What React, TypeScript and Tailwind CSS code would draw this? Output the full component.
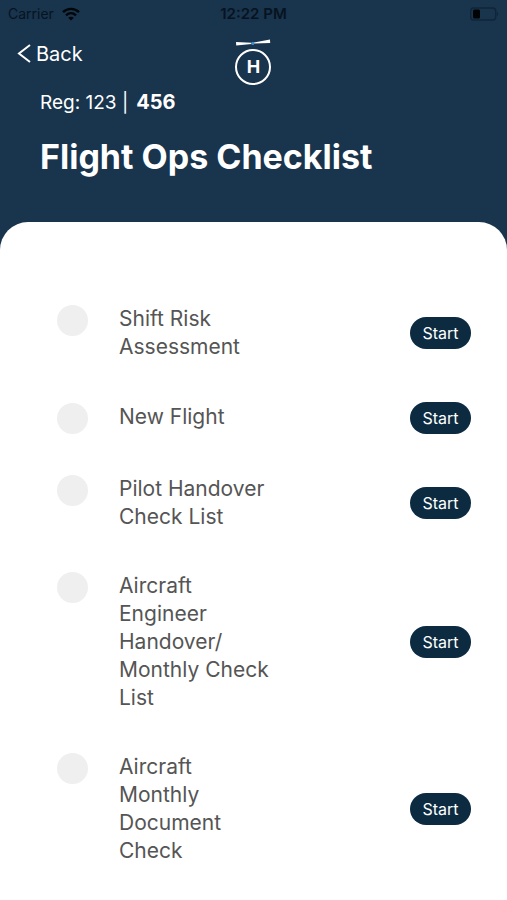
import React from 'react';

const checklists = [
  'Shift Risk Assessment',
  'New Flight',
  'Pilot Handover Check List',
  'Aircraft Engineer Handover/ Monthly Check List',
  'Aircraft Monthly Document Check',
];

const StatusBar: React.FC = () => (
  <div className="grid grid-cols-3 items-center h-7 px-2 text-sm text-[#07131f]">
    <div className="flex items-center gap-2">
      <span>Carrier</span>
      <svg width="18" height="14" viewBox="0 0 18 14" fill="none" stroke="#020609" strokeWidth="2.4" aria-hidden="true">
        <path d="M1 5.2C5.6.7 12.4.7 17 5.2" />
        <path d="M4 8.4c3-2.8 7-2.8 10 0" />
        <path d="M9 13.6 6.2 10.8c1.6-1.5 4-1.5 5.6 0z" fill="#020609" stroke="none" />
      </svg>
    </div>
    <span className="text-center text-[15px] font-semibold">12:22 PM</span>
    <svg className="justify-self-end" width="30" height="14" viewBox="0 0 30 14" aria-hidden="true">
      <rect x="1.7" y="1" width="25" height="12" rx="3" fill="none" stroke="#0f2539" strokeWidth="1.4" />
      <rect x="4" y="2.5" width="7" height="9" rx="1.5" fill="#010305" />
      <path d="M28 5v4c1.5-.5 1.5-3.5 0-4z" fill="#0f2539" />
    </svg>
  </div>
);

const Logo: React.FC = () => (
  <div className="flex flex-col items-center text-white">
    <svg className="overflow-visible" width="36" height="9" viewBox="0 0 36 9" aria-hidden="true">
      <path d="M1 2 16.5 2.8v1.1L1.2 5.4z" fill="#fff" />
      <path d="M19 2.4 35-.4l.2 3.4L19 3.6z" fill="#fff" />
      <circle cx="17.8" cy="3.4" r="1.6" fill="#3f8fd0" />
    </svg>
    <div className="flex items-center justify-center size-9 rounded-full border-2 border-white text-lg font-bold">H</div>
  </div>
);

const App: React.FC = () => {
  return (
    <div className="min-h-screen flex flex-col bg-[#19344d] font-[Inter,sans-serif]">
      <header className="pb-[45px]">
        <StatusBar />
        <div className="grid grid-cols-3 items-start px-4 pt-3">
          <button type="button" className="flex items-center gap-1 h-7 text-xl text-white">
            <svg width="16" height="20" viewBox="0 0 16 20" fill="none" stroke="#fff" strokeWidth="2" aria-hidden="true">
              <path d="M14 1 3 9.5 14 18" />
            </svg>
            Back
          </button>
          <Logo />
        </div>
        <div className="px-10 pt-[5px] text-white">
          <p className="flex items-baseline gap-2 text-[19px] leading-6">
            <span>Reg: 123 |</span>
            <strong className="text-xl leading-6 font-bold">456</strong>
          </p>
          <h1 className="mt-[22px] text-[34px] leading-10 font-bold">Flight Ops Checklist</h1>
        </div>
      </header>

      <main className="flex-1 rounded-t-[28px] bg-white pt-[83px] pb-9 pl-[57px] pr-9">
        <ul className="flex flex-col gap-[41px]">
          {checklists.map((name, index) => (
            <li key={index} className="flex items-center justify-between">
              <div className="flex items-start gap-[31px]">
                <input
                  id={`checklist-${index}`}
                  type="checkbox"
                  className="appearance-none shrink-0 size-[31px] rounded-full bg-[#efefef] checked:bg-[#0c2b41]"
                />
                <label htmlFor={`checklist-${index}`} className="w-[156px] text-[21px] leading-7 text-[#555]">
                  {name}
                </label>
              </div>
              <button type="button" className="w-[61px] h-8 rounded-full bg-[#0c2b41] text-base text-white">
                Start
              </button>
            </li>
          ))}
        </ul>
      </main>
    </div>
  );
};

export default App;
